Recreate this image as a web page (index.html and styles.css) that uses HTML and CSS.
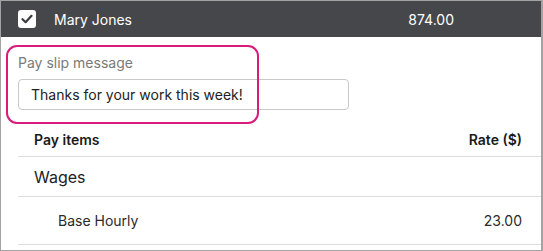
FILE: index.html
```html
<!DOCTYPE html>
<html>
<head>
<meta charset="utf-8">
<link rel="stylesheet" href="styles.css">
</head>
<body>
<div class="frame">
  <div class="header">
    <span class="check">
      <svg width="12" height="10" viewBox="0 0 12 10"><path d="M1.5 5.2 L4.6 8.2 L10.5 1.8" fill="none" stroke="#3a3b3f" stroke-width="2.2" stroke-linecap="round" stroke-linejoin="round"/></svg>
    </span>
    <span class="name">Mary Jones</span>
    <span class="amount">874.00</span>
  </div>
  <div class="body">
    <div class="field">
      <div class="label">Pay slip message</div>
      <div class="input">Thanks for your work this week!</div>
    </div>
    <div class="table">
      <div class="row head"><span>Pay items</span><span>Rate ($)</span></div>
      <div class="row group"><span>Wages</span><span></span></div>
      <div class="row item"><span class="indent">Base Hourly</span><span>23.00</span></div>
    </div>
    <div class="highlight"></div>
  </div>
</div>
</body>
</html>
```

FILE: styles.css
```css
* { box-sizing: border-box; }
html, body { margin: 0; padding: 0; background: #fff; }
body { font-family: Inter, "Noto Sans", sans-serif; color: #222; }

.frame {
  width: 543px;
  height: 251px;
  border: 1px solid #a3a3a3;
  border-right-width: 2px;
  overflow: hidden;
}

.header {
  height: 36px;
  background: #46474b;
  display: flex;
  align-items: center;
  padding-left: 17px;
  color: #fff;
  font-size: 14px;
}
.check {
  width: 18px;
  height: 18px;
  background: #fff;
  border-radius: 3px;
  display: flex;
  align-items: center;
  justify-content: center;
}
.name { margin-left: 18px; flex: 1; }
.amount { margin-right: 87px; }

.body {
  position: relative;
  padding: 16px 0 0 17px;
}
.label {
  font-size: 14px;
  line-height: 20px;
  color: #7a7a7a;
}
.input {
  margin-top: 6px;
  width: 331px;
  height: 31px;
  border: 1px solid #c9c9c9;
  border-radius: 4px;
  padding-left: 12px;
  font-size: 14px;
  line-height: 29px;
  color: #222;
}
.table { margin-top: 13px; }
.row {
  display: flex;
  justify-content: space-between;
  align-items: center;
  padding: 0 19px 0 16px;
  border-bottom: 1px solid #dedede;
  font-size: 14px;
}
.row.head { height: 34px; font-weight: 600; color: #1a1a1a; }
.row.group { height: 40px; font-size: 16px; }
.row.item { height: 48px; color: #2a2a2a; }
.indent { padding-left: 24px; }

.highlight {
  position: absolute;
  left: 5px;
  top: 8px;
  width: 253px;
  height: 79px;
  border: 2.5px solid #d81c7a;
  border-radius: 11px;
}
```
